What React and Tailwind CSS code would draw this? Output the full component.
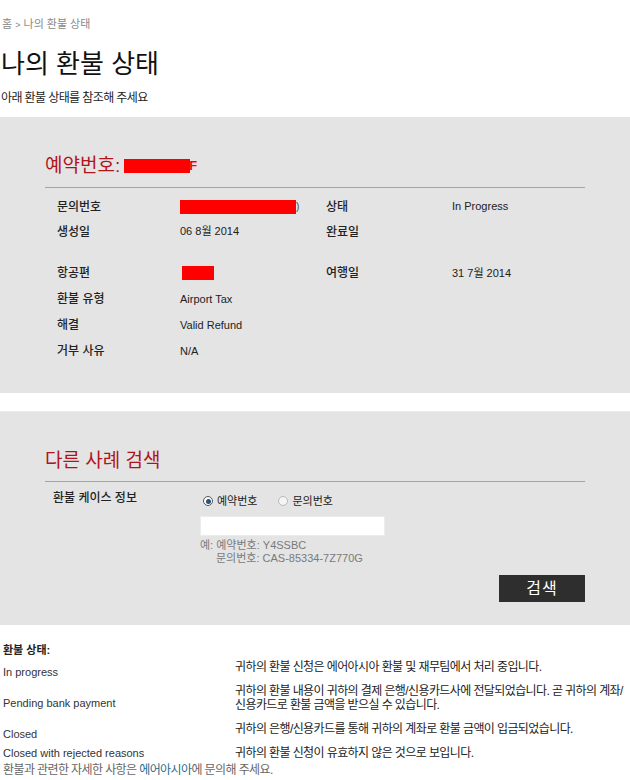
import React from "react";

const font = { fontFamily: '"Liberation Sans", "Noto Sans CJK KR", sans-serif' };

function Redact({ w, h = 14 }) {
  return <span className="inline-block bg-[#ff0000]" style={{ width: w, height: h }} />;
}

function InfoRow({ label, value, label2, value2, h = "h-[26px]" }) {
  return (
    <div className={`grid grid-cols-[123px_146px_126px_1fr] items-center ${h}`}>
      <div className="text-[12px] text-[#222] font-medium">{label}</div>
      <div className="text-[11px] text-[#222]">{value}</div>
      <div className="text-[12px] text-[#222] font-medium">{label2}</div>
      <div className="text-[11px] text-[#222]">{value2}</div>
    </div>
  );
}

function Radio({ checked, label }) {
  return (
    <label className="flex items-center gap-[4px] text-[11px] text-[#222]">
      <span
        className={`w-[10px] h-[10px] rounded-full border flex items-center justify-center ${
          checked ? "border-[#555] bg-white" : "border-[#bbb] bg-[#f4f4f4]"
        }`}
      >
        {checked && <span className="w-[5px] h-[5px] rounded-full bg-[#2c4f78]" />}
      </span>
      {label}
    </label>
  );
}

const statuses = [
  {
    name: "In progress",
    desc: ["귀하의 환불 신청은 에어아시아 환불 및 재무팀에서 처리 중입니다."],
  },
  {
    name: "Pending bank payment",
    desc: [
      "귀하의 환불 내용이 귀하의 결제 은행/신용카드사에 전달되었습니다. 곧 귀하의 계좌/",
      "신용카드로 환불 금액을 받으실 수 있습니다.",
    ],
  },
  {
    name: "Closed",
    desc: ["귀하의 은행/신용카드를 통해 귀하의 계좌로 환불 금액이 입금되었습니다."],
  },
  {
    name: "Closed with rejected reasons",
    desc: ["귀하의 환불 신청이 유효하지 않은 것으로 보입니다."],
    last: true,
  },
];

export default function App() {
  return (
    <div className="w-[630px] bg-white overflow-hidden" style={font}>
      {/* breadcrumb */}
      <div className="pt-[17px] pl-[2px] text-[11px] leading-[14px] text-[#888]">
        홈 <span className="text-[9px]">&gt;</span> 나의 환불 상태
      </div>

      <h1 className="mt-[17px] pl-[1px] text-[26px] leading-[30px] text-[#111] font-normal">
        나의 환불 상태
      </h1>
      <p className="mt-[12px] pl-[1px] text-[12px] leading-[14px] text-[#222] tracking-[-0.6px]">
        아래 환불 상태를 참조해 주세요
      </p>

      {/* booking details */}
      <section className="mt-[12px] bg-[#e4e4e4] h-[276px] px-[45px] pt-[38px]">
        <div className="flex items-center h-[22px] text-[19px] text-[#b0141c] leading-[22px]">
          <span>예약번호:</span>
          <span className="ml-[4px] flex items-center">
            <Redact w={66} h={14} />
            <span className="text-[13px] font-bold text-[#ff0000] -ml-[1px]">F</span>
          </span>
        </div>
        <div className="mt-[10px] border-b border-[#a3a3a3]" />
        <div className="pl-[12px] pt-[6px]">
          <InfoRow
            label="문의번호"
            value={
              <span className="flex items-center">
                <Redact w={116} h={14} />
                <span className="text-[10px] text-[#444]">)</span>
              </span>
            }
            label2="상태"
            value2="In Progress"
            h="h-[25px]"
          />
          <InfoRow label="생성일" value="06 8월 2014" label2="완료일" value2="" h="h-[25px]" />
          <div className="h-[16px]" />
          <InfoRow
            label="항공편"
            value={
              <span className="flex items-center pl-[2px]">
                <Redact w={32} h={14} />
              </span>
            }
            label2="여행일"
            value2="31 7월 2014"
          />
          <InfoRow label="환불 유형" value="Airport Tax" />
          <InfoRow label="해결" value="Valid Refund" />
          <InfoRow label="거부 사유" value="N/A" />
        </div>
      </section>

      {/* search another case */}
      <section className="mt-[18px] bg-[#e4e4e4] h-[214px] px-[45px] pt-[38px] border-t border-[#ececec]">
        <div className="h-[22px] text-[19px] leading-[22px] text-[#b0141c]">다른 사례 검색</div>
        <div className="mt-[9px] border-b border-[#a3a3a3]" />
        <div className="flex pt-[9px]">
          <div className="w-[155px] pl-[8px] text-[12px] leading-[14px] text-[#222] font-medium">
            환불 케이스 정보
          </div>
          <div className="flex-1 pt-[3px]">
            <div className="flex items-center gap-[21px] pl-[3px] h-[14px]">
              <Radio checked label="예약번호" />
              <Radio label="문의번호" />
            </div>
            <input
              type="text"
              className="mt-[8px] block w-[185px] h-[20px] bg-white border border-[#ececec] outline-none"
            />
            <div className="mt-[3px] text-[11px] leading-[13px] text-[#7a7a7a]">
              <div>예: 예약번호: Y4SSBC</div>
              <div className="pl-[16px]">문의번호: CAS-85334-7Z770G</div>
            </div>
            <div className="flex justify-end mt-[10px]">
              <button className="w-[86px] h-[27px] bg-[#2e2e2e] text-white text-[16px] tracking-[1px] leading-[27px]">
                검색
              </button>
            </div>
          </div>
        </div>
      </section>

      {/* status legend */}
      <section className="pt-[18px] pl-[3px] text-[11px] leading-[14px] text-[#222]">
        <div className="font-bold text-[11px]">환불 상태:</div>
        <div className="mt-[3px]">
          {statuses.map((s) => (
            <div key={s.name} className="flex items-center">
              <div className="w-[232px] text-[11px] text-[#333]">{s.name}</div>
              <div className={`flex-1 text-[12px] tracking-[-0.6px] ${s.last ? "" : "pb-[10px]"}`}>
                {s.desc.map((d) => (
                  <div key={d}>{d}</div>
                ))}
              </div>
            </div>
          ))}
        </div>
        <div className="mt-[3px] text-[12px] text-[#666] tracking-[-0.6px]">
          환불과 관련한 자세한 사항은 <span className="text-[#1f6a8c]">에어아시아</span>에 문의해 주세요.
        </div>
      </section>
    </div>
  );
}
